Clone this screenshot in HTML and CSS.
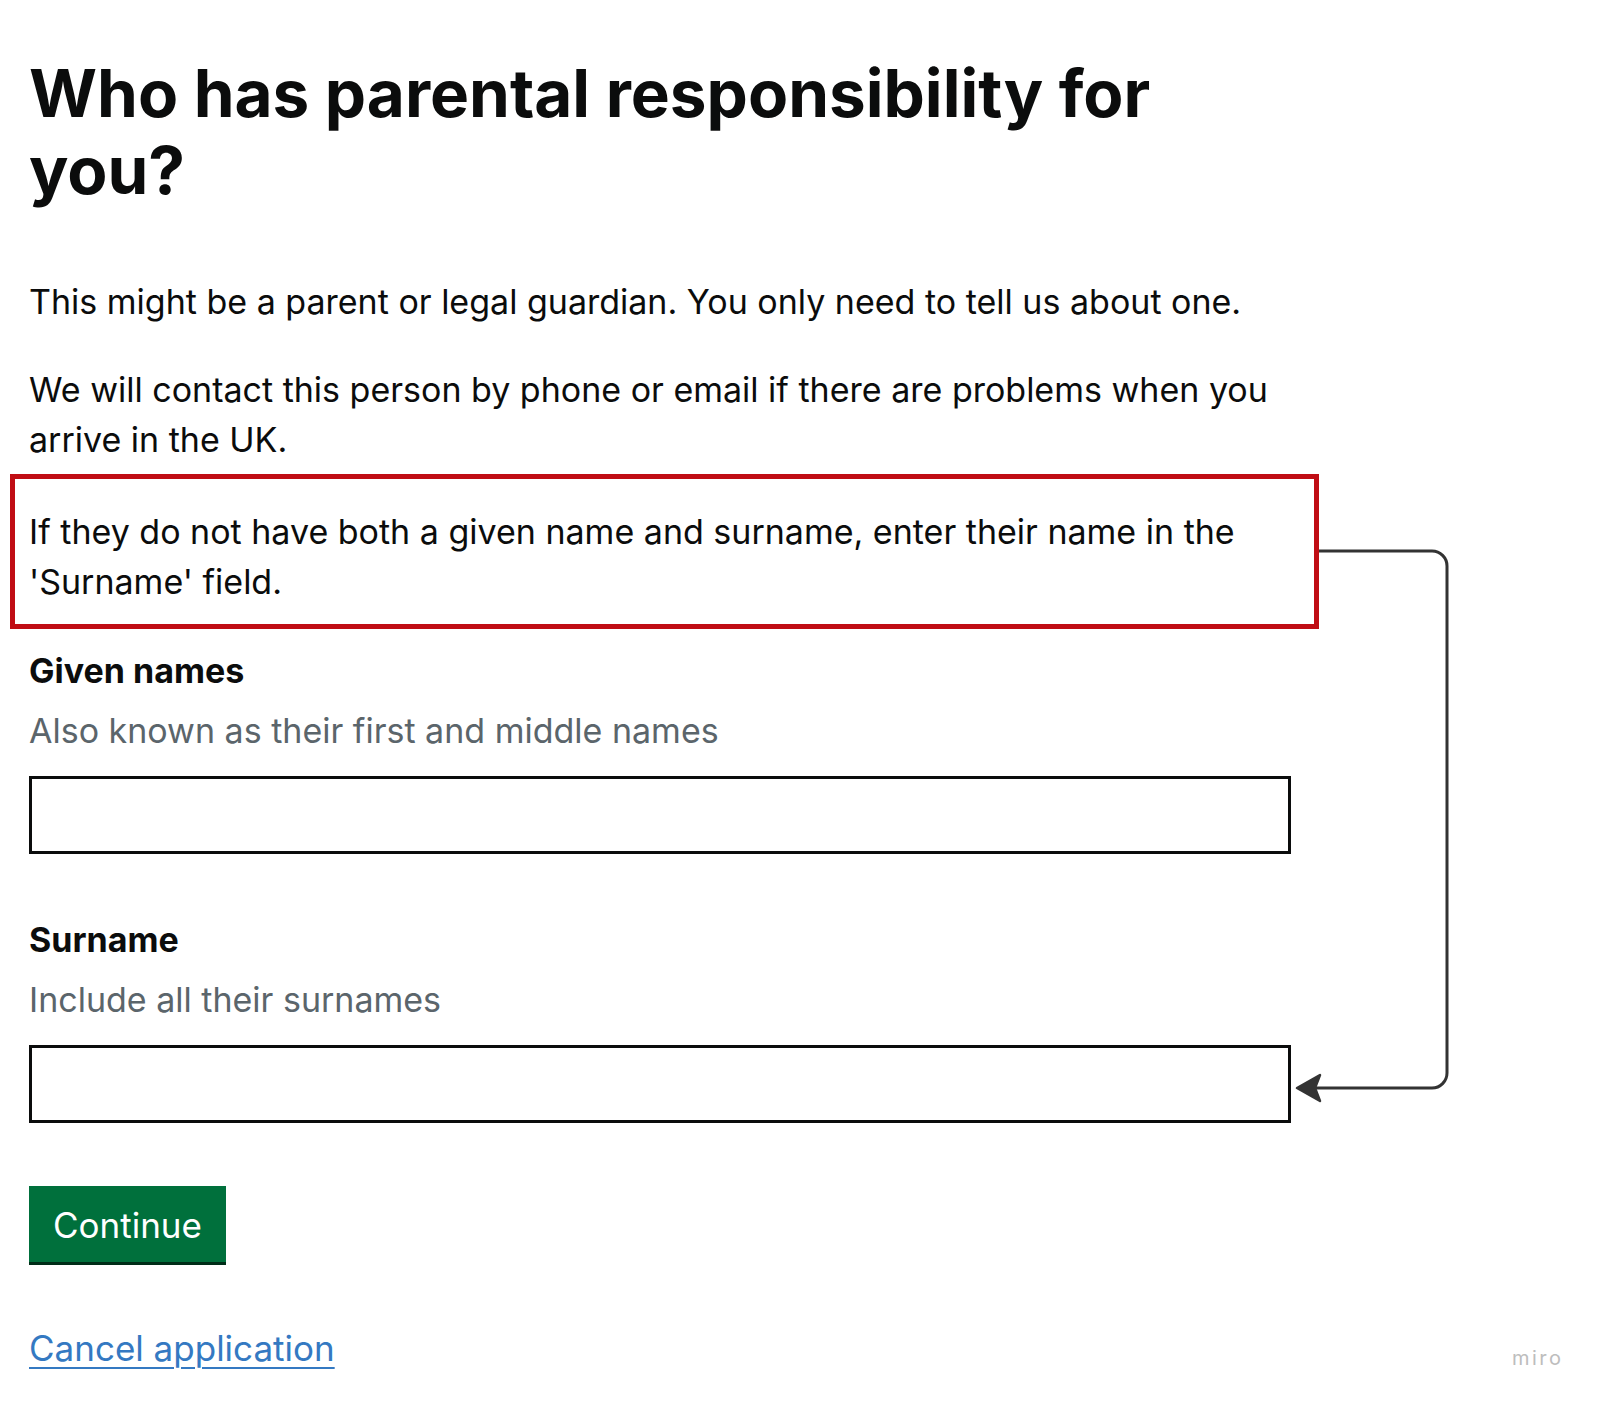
FILE: index.html
```html
<!DOCTYPE html>
<html lang="en">
<head>
<meta charset="utf-8">
<title>Who has parental responsibility for you?</title>
<link rel="stylesheet" href="styles.css">
</head>
<body>
<main class="page">
  <h1 class="title">Who has parental responsibility for you?</h1>
  <p class="body-text lead">This might be a parent or legal guardian. You only need to tell us about one.</p>
  <p class="body-text follow">We will contact this person by phone or email if there are problems when you arrive in the UK.</p>
  <div class="callout">
    <p class="body-text">If they do not have both a given name and surname, enter their name in the 'Surname' field.</p>
  </div>
  <div class="field first">
    <label class="label" for="given-names">Given names</label>
    <div class="hint">Also known as their first and middle names</div>
    <input class="input" id="given-names" type="text">
  </div>
  <div class="field">
    <label class="label" for="surname">Surname</label>
    <div class="hint">Include all their surnames</div>
    <input class="input" id="surname" type="text">
  </div>
  <button class="button" type="button">Continue</button>
  <p class="cancel"><a class="link" href="#">Cancel application</a></p>
</main>
<svg class="connector" width="1600" height="1405" viewBox="0 0 1600 1405" aria-hidden="true">
  <path d="M1319 551 H1432 A15 15 0 0 1 1447 566 V1073 A15 15 0 0 1 1432 1088 H1316" fill="none" stroke="#333333" stroke-width="3"/>
  <path d="M1297 1088 L1320 1075 L1315 1088 L1320 1101 Z" fill="#333333" stroke="#333333" stroke-width="2.5" stroke-linejoin="round"/>
</svg>
<div class="watermark">miro</div>
</body>
</html>
```
FILE: styles.css
```css
html, body {
  margin: 0;
  padding: 0;
  background: #ffffff;
}

body {
  position: relative;
  width: 1600px;
  min-height: 1405px;
  font-family: Inter, "Noto Sans", Arial, sans-serif;
  color: #0b0c0c;
}

.page {
  width: 1262px;
  padding: 55px 0 0 29px;
}

.title {
  margin: 0;
  width: 1170px;
  font-size: 65.6px;
  line-height: 77px;
  font-weight: 700;
}

.body-text {
  margin: 0;
  font-size: 34px;
  line-height: 50px;
  font-weight: 400;
}

.lead {
  margin-top: 68px;
}

.follow {
  margin-top: 38px;
}

.callout {
  margin: 9px -28px 0 -19px;
  padding: 28px 14px 17px 14px;
  border: 5px solid #c00d14;
}

.field.first {
  margin-top: 22px;
}

.field {
  margin-top: 66px;
}

.label {
  display: block;
  font-size: 34px;
  line-height: 40px;
  font-weight: 700;
}

.hint {
  margin-top: 15px;
  font-size: 34px;
  line-height: 50px;
  color: #5b656b;
}

.input {
  display: block;
  box-sizing: border-box;
  width: 1262px;
  height: 78px;
  margin: 20px 0 0 0;
  border: 3px solid #0b0c0c;
  border-radius: 0;
  background: #ffffff;
}

.button {
  display: block;
  box-sizing: border-box;
  width: 197px;
  height: 76px;
  margin-top: 63px;
  padding: 3px 0 0 0;
  border: 0;
  border-radius: 0;
  background: #00703c;
  box-shadow: 0 3px 0 #002d18;
  color: #ffffff;
  font-family: Inter, "Noto Sans", Arial, sans-serif;
  font-size: 35px;
  line-height: 73px;
}

.cancel {
  margin: 61px 0 0 0;
  font-size: 35px;
  line-height: 50px;
}

.link {
  color: #3479c2;
  text-decoration: underline;
  text-decoration-thickness: 2px;
  text-underline-offset: 6px;
}

.connector {
  position: absolute;
  left: 0;
  top: 0;
  pointer-events: none;
}

.watermark {
  position: absolute;
  left: 1512px;
  top: 1346px;
  font-size: 20px;
  letter-spacing: 2.5px;
  color: #bdbdbd;
}
```
